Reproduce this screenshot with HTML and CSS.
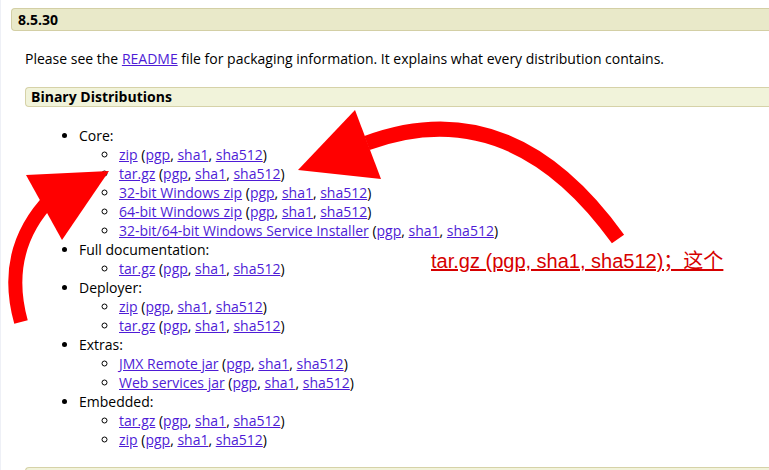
FILE: index.html
```html
<!DOCTYPE html>
<html>
<head>
<meta charset="utf-8">
<link rel="stylesheet" href="styles.css">
</head>
<body>
<div class="page">
  <h3 class="version">8.5.30</h3>
  <div class="section">
    <p class="intro">Please see the <a href="#">README</a> file for packaging information. It explains what every distribution contains.</p>
    <h4 class="sub">Binary Distributions</h4>
    <ul class="dist">
      <li>Core:
        <ul>
          <li><a href="#">zip</a> (<a href="#">pgp</a>, <a href="#">sha1</a>, <a href="#">sha512</a>)</li>
          <li><a href="#">tar.gz</a> (<a href="#">pgp</a>, <a href="#">sha1</a>, <a href="#">sha512</a>)</li>
          <li><a href="#">32-bit Windows zip</a> (<a href="#">pgp</a>, <a href="#">sha1</a>, <a href="#">sha512</a>)</li>
          <li><a href="#">64-bit Windows zip</a> (<a href="#">pgp</a>, <a href="#">sha1</a>, <a href="#">sha512</a>)</li>
          <li><a href="#">32-bit/64-bit Windows Service Installer</a> (<a href="#">pgp</a>, <a href="#">sha1</a>, <a href="#">sha512</a>)</li>
        </ul>
      </li>
      <li>Full documentation:
        <ul>
          <li><a href="#">tar.gz</a> (<a href="#">pgp</a>, <a href="#">sha1</a>, <a href="#">sha512</a>)</li>
        </ul>
      </li>
      <li>Deployer:
        <ul>
          <li><a href="#">zip</a> (<a href="#">pgp</a>, <a href="#">sha1</a>, <a href="#">sha512</a>)</li>
          <li><a href="#">tar.gz</a> (<a href="#">pgp</a>, <a href="#">sha1</a>, <a href="#">sha512</a>)</li>
        </ul>
      </li>
      <li>Extras:
        <ul>
          <li><a href="#">JMX Remote jar</a> (<a href="#">pgp</a>, <a href="#">sha1</a>, <a href="#">sha512</a>)</li>
          <li><a href="#">Web services jar</a> (<a href="#">pgp</a>, <a href="#">sha1</a>, <a href="#">sha512</a>)</li>
        </ul>
      </li>
      <li>Embedded:
        <ul>
          <li><a href="#">tar.gz</a> (<a href="#">pgp</a>, <a href="#">sha1</a>, <a href="#">sha512</a>)</li>
          <li><a href="#">zip</a> (<a href="#">pgp</a>, <a href="#">sha1</a>, <a href="#">sha512</a>)</li>
        </ul>
      </li>
    </ul>
    <div class="sub next"></div>
  </div>
</div>
<svg class="overlay" width="769" height="470" viewBox="0 0 769 470">
  <path d="M617 239 Q510 90 366 143" fill="none" stroke="#ff0000" stroke-width="15"/>
  <polygon points="354,110 297,170 380,179" fill="#ff0000"/>
  <path d="M20 322 Q0 250 50 198" fill="none" stroke="#ff0000" stroke-width="14"/>
  <polygon points="25,175 108,171 61,240" fill="#ff0000"/>
</svg>
<div class="note">tar.gz (pgp, sha1, sha512)；这个</div>
</body>
</html>
```
FILE: styles.css
```css
html, body {
  margin: 0;
  padding: 0;
  background: #ffffff;
}
body {
  font-family: "Open Sans", "Noto Sans", sans-serif;
  font-size: 14px;
  line-height: 19px;
  color: #000000;
  overflow: hidden;
  width: 769px;
  height: 470px;
  position: relative;
  border-left: 1px solid #eef0f6;
  box-sizing: border-box;
}
.page {
  padding: 8px 0 0 10px;
}
.version {
  margin: 0;
  font-size: 14px;
  font-weight: bold;
  line-height: 21px;
  background: #e9e9c9;
  border: 1px solid #d3cfa5;
  border-right: none;
  border-radius: 4px 0 0 4px;
  padding: 0 0 0 6px;
}
.section {
  padding-left: 14px;
}
.intro {
  margin: 18px 0 0 0;
}
a {
  color: #4e1cd6;
  text-decoration: underline;
}
.sub {
  margin: 19px 0 0 0;
  font-size: 14px;
  font-weight: bold;
  line-height: 18px;
  background: #f1f3da;
  border: 1px solid #d6d2a8;
  border-right: none;
  border-radius: 4px 0 0 4px;
  padding: 0 0 0 5px;
}
.next {
  height: 18px;
  margin-top: 18px;
}
.dist {
  margin: 19px 0 0 0;
  padding-left: 54px;
  list-style: disc;
}
.dist ul {
  margin: 0;
  padding-left: 40px;
  list-style: circle;
}
.overlay {
  position: absolute;
  left: 0;
  top: 0;
  pointer-events: none;
}
.note {
  position: absolute;
  left: 430px;
  top: 249px;
  font-family: "Liberation Sans", "Noto Sans CJK SC", sans-serif;
  font-size: 20px;
  line-height: 24px;
  color: #d60000;
  text-decoration: underline;
  white-space: nowrap;
}
```
